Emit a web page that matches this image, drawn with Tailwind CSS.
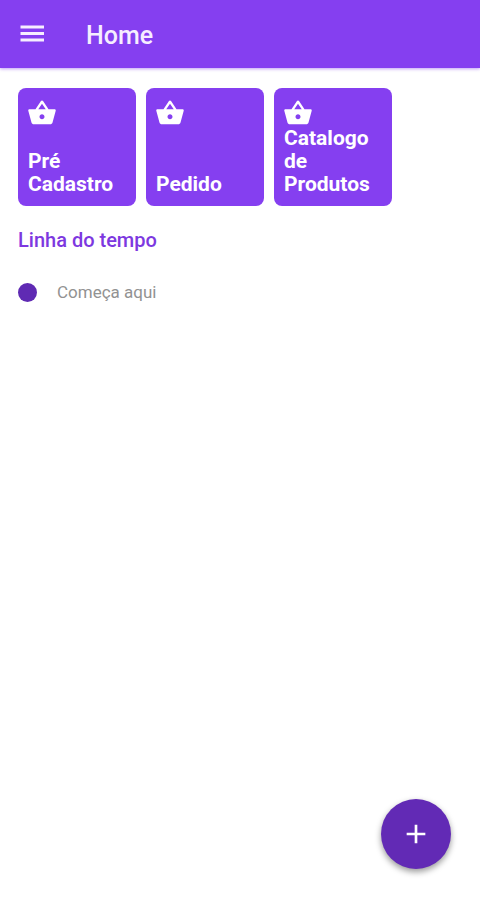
<!DOCTYPE html>
<html lang="pt-BR">
<head>
<meta charset="utf-8">
<meta name="viewport" content="width=device-width, initial-scale=1">
<title>Home</title>
<script src="https://cdn.jsdelivr.net/npm/@tailwindcss/browser@4"></script>
</head>
<body class="min-h-screen bg-white font-['Roboto',sans-serif]">
<svg class="hidden" aria-hidden="true">
  <symbol id="basket" viewBox="0 0 24 24">
    <path d="M17.21 9l-4.38-6.56c-.19-.28-.51-.42-.83-.42-.32 0-.64.14-.83.43L6.79 9H2c-.55 0-1 .45-1 1 0 .09.01.18.04.27l2.54 9.27c.23.84 1 1.46 1.92 1.46h13c.92 0 1.69-.62 1.93-1.46l2.54-9.27L23 10c0-.55-.45-1-1-1h-4.79zM9 9l3-4.4L15 9H9zm3 8c-1.1 0-2-.9-2-2s.9-2 2-2 2 .9 2 2-.9 2-2 2z"/>
  </symbol>
</svg>
<header class="flex h-17 items-center gap-[38px] bg-[#853ff0] px-4 text-[#f6eeff] shadow-[0_1px_3px_#853ff080]">
  <button type="button" aria-label="Menu" class="size-8">
    <svg class="size-8" viewBox="0 0 32 32" fill="currentColor" aria-hidden="true"><path d="M4.500 7.500h23.500v3h-23.500zM4.500 14h23.500v3h-23.500zM4.500 20.500h23.500v3h-23.500z"/></svg>
  </button>
  <h1 class="pt-1 text-[25px] leading-8 font-medium">Home</h1>
</header>
<main class="px-[18px] pt-5">
  <nav class="flex gap-2.5 text-[21px] leading-[23px] font-bold text-white" aria-label="Atalhos">
    <a href="#pre-cadastro" class="flex size-[118px] flex-col justify-between rounded-lg bg-[#853ff0] p-2.5">
      <svg class="-mb-px -ml-px size-[30px] shrink-0" fill="currentColor" aria-hidden="true"><use href="#basket"/></svg>
      <span>Pré Cadastro</span>
    </a>
    <a href="#pedido" class="flex size-[118px] flex-col justify-between rounded-lg bg-[#853ff0] p-2.5">
      <svg class="-mb-px -ml-px size-[30px] shrink-0" fill="currentColor" aria-hidden="true"><use href="#basket"/></svg>
      <span>Pedido</span>
    </a>
    <a href="#catalogo" class="flex size-[118px] flex-col justify-between rounded-lg bg-[#853ff0] p-2.5">
      <svg class="-mb-px -ml-px size-[30px] shrink-0" fill="currentColor" aria-hidden="true"><use href="#basket"/></svg>
      <span>Catalogo de Produtos</span>
    </a>
  </nav>
  <section>
    <h2 class="mt-5 text-xl leading-7 font-medium text-[#7d38e0]">Linha do tempo</h2>
    <ul class="mt-6">
      <li class="flex items-center gap-5 text-[17px] leading-7 text-[#929292]">
        <span class="size-[19px] rounded-full bg-[#5f2ab3]"></span>
        <span>Começa aqui</span>
      </li>
    </ul>
  </section>
</main>
<button type="button" aria-label="Adicionar" class="fixed right-[29px] bottom-[31px] flex size-[70px] items-center justify-center rounded-full bg-[#622ab5] text-white shadow-[0_3px_6px_#00000066]">
  <svg class="size-8" viewBox="0 0 24 24" fill="currentColor" aria-hidden="true"><path d="M19 13h-6v6h-2v-6H5v-2h6V5h2v6h6v2z"/></svg>
</button>
</body>
</html>
